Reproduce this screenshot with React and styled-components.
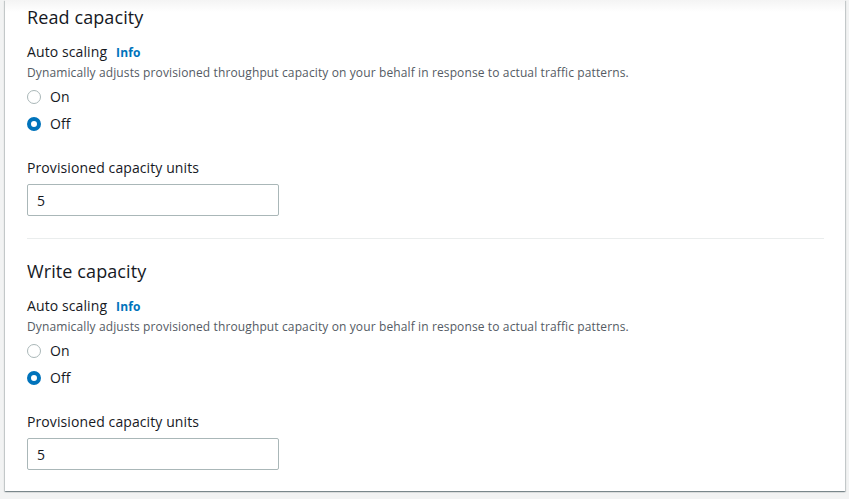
import React, { useState } from "react";
import styled, { createGlobalStyle } from "styled-components";

const GlobalStyle = createGlobalStyle`
  html, body {
    margin: 0;
    padding: 0;
    background-color: #f2f3f3;
    font-family: "Open Sans", "Liberation Sans", sans-serif;
    letter-spacing: 0.1px;
    color: #16191f;
  }
`;

const Page = styled.div`
  padding: 0 4px 6px 5px;
`;

const Card = styled.div`
  background: linear-gradient(#f4f4f4, #ffffff 12px);
  box-shadow: 0 1px 1px 0 rgba(0, 28, 36, 0.3), 1px 1px 1px 0 rgba(0, 28, 36, 0.15),
    -1px 1px 1px 0 rgba(0, 28, 36, 0.15);
  padding: 6px 21px 21px 22px;
`;

const Section = styled.section`
  padding-bottom: 22px;
  border-bottom: 1px solid #eaeded;
  margin-bottom: 21px;
  &:last-child {
    padding-bottom: 0;
    border-bottom: none;
    margin-bottom: 0;
  }
`;

const Heading = styled.h2`
  margin: 0 0 14px;
  font-size: 18px;
  line-height: 22px;
  font-weight: 500;
`;

const Label = styled.div`
  font-size: 14px;
  line-height: 20px;
  display: flex;
  align-items: baseline;
  gap: 9px;
`;

const InfoLink = styled.a`
  font-size: 12px;
  font-weight: 700;
  color: #0073bb;
  text-decoration: none;
`;

const Description = styled.p`
  margin: 2px 0 6px;
  font-size: 12px;
  line-height: 16px;
  letter-spacing: 0.12px;
  color: #545b64;
`;

const RadioList = styled.div`
  display: flex;
  flex-direction: column;
  gap: 7px;
`;

const RadioRow = styled.label`
  display: flex;
  align-items: center;
  gap: 9px;
  font-size: 14px;
  line-height: 20px;
  cursor: pointer;
`;

const RadioDot = styled.span`
  box-sizing: border-box;
  width: 14px;
  height: 14px;
  border-radius: 50%;
  background: #fff;
  border: ${(p) => (p.$checked ? "4px solid #0073bb" : "1px solid #aab7b8")};
`;

const Field = styled.div`
  margin-top: 24px;
`;

const Input = styled.input`
  box-sizing: border-box;
  display: block;
  margin-top: 6px;
  width: 252px;
  height: 32px;
  padding: 0 9px;
  border: 1px solid #aab7b8;
  border-radius: 2px;
  font-family: inherit;
  font-size: 14px;
  color: #16191f;
  outline: none;
`;

const CapacitySection = ({ title }) => {
  const [auto, setAuto] = useState("off");
  return (
    <Section>
      <Heading>{title}</Heading>
      <Label>
        Auto scaling <InfoLink href="#">Info</InfoLink>
      </Label>
      <Description>
        Dynamically adjusts provisioned throughput capacity on your behalf in response to actual traffic patterns.
      </Description>
      <RadioList>
        <RadioRow onClick={() => setAuto("on")}>
          <RadioDot $checked={auto === "on"} />
          On
        </RadioRow>
        <RadioRow onClick={() => setAuto("off")}>
          <RadioDot $checked={auto === "off"} />
          Off
        </RadioRow>
      </RadioList>
      <Field>
        <Label>Provisioned capacity units</Label>
        <Input type="text" defaultValue="5" />
      </Field>
    </Section>
  );
};

const App = () => {
  return (
    <>
      <GlobalStyle />
      <Page>
        <Card>
          <CapacitySection title="Read capacity" />
          <CapacitySection title="Write capacity" />
        </Card>
      </Page>
    </>
  );
};

export default App;
